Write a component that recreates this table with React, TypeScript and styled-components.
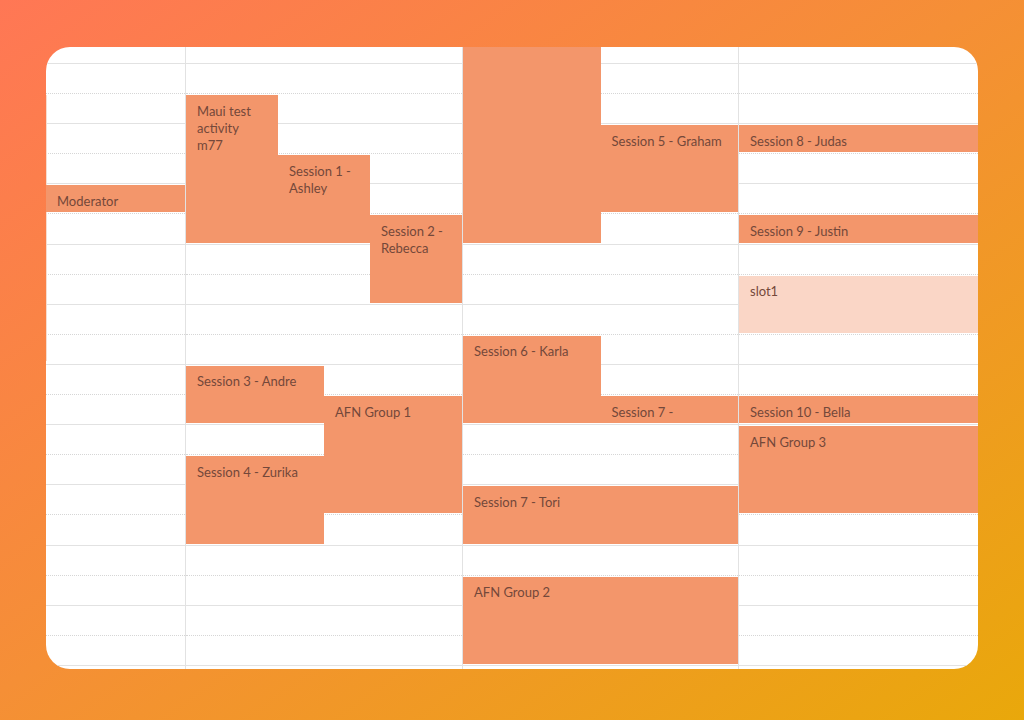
import React from 'react';
import styled, { createGlobalStyle } from 'styled-components';

const GlobalStyle = createGlobalStyle`
  html, body { margin: 0; padding: 0; }
  body { font-family: Lato, "Noto Sans", sans-serif; }
  * { box-sizing: border-box; }
`;

const ROWS = 23;

const Page = styled.div`
  width: 1024px;
  height: 720px;
  padding: 47px 46px 51px;
  display: flex;
  background: linear-gradient(to bottom right, #ff7755 0%, #f58f36 48%, #e9a80b 100%);
`;

const Card = styled.div`
  flex: 1;
  background: #ffffff;
  border-radius: 24px;
  overflow: hidden;
`;

const Timeline = styled.div`
  display: grid;
  grid-template-columns: 139px 277px 276px 240px;
  margin-top: -43.2px;
`;

const DayColumn = styled.div<{ $sub: number; $divider?: boolean }>`
  display: grid;
  grid-template-columns: repeat(${(p) => p.$sub}, minmax(0, 1fr));
  grid-template-rows: repeat(${ROWS}, 30.1px);
  border-left: ${(p) => (p.$divider ? '1px solid #e2e2e2' : 'none')};
`;

const Slot = styled.div<{ $row: number; $half: boolean }>`
  grid-column: 1 / -1;
  grid-row: ${(p) => p.$row};
  border-bottom: ${(p) => (p.$half ? '1px dotted #d6d6d6' : '1px solid #e2e2e2')};
`;

const Trace = styled.div<{ $row: string }>`
  grid-column: 1 / 2;
  grid-row: ${(p) => p.$row};
  width: 1px;
  background: #f6dccf;
  margin: 1px 0 4px;
`;

const Event = styled.div<{ $row: string; $col: string; $soft?: boolean; $narrow?: boolean }>`
  grid-row: ${(p) => p.$row};
  grid-column: ${(p) => p.$col};
  margin: 1px 0 2px;
  padding: 7.5px ${(p) => (p.$narrow ? '14px' : '10px')} 0 11px;
  background: ${(p) => (p.$soft ? '#fad6c6' : '#f3966b')};
  color: #74483a;
  font-size: 13px;
  line-height: 17px;
  overflow: hidden;
  min-width: 0;
  z-index: 1;
`;

type Ev = { t: string; row: string; col: string; soft?: boolean; narrow?: boolean };

const columns: { sub: number; events: Ev[]; trace?: string }[] = [
  {
    sub: 1,
    trace: '4 / 13',
    events: [{ t: 'Moderator', row: '7 / 8', col: '1 / 2' }],
  },
  {
    sub: 6,
    events: [
      { t: 'Maui test activity m77', row: '4 / 9', col: '1 / 3', narrow: true },
      { t: 'Session 1 - Ashley', row: '6 / 9', col: '3 / 5', narrow: true },
      { t: 'Session 2 - Rebecca', row: '8 / 11', col: '5 / 7', narrow: true },
      { t: 'Session 3 - Andre', row: '13 / 15', col: '1 / 4' },
      { t: 'AFN Group 1', row: '14 / 18', col: '4 / 7' },
      { t: 'Session 4 - Zurika', row: '16 / 19', col: '1 / 4' },
    ],
  },
  {
    sub: 2,
    events: [
      { t: '', row: '1 / 9', col: '1 / 2' },
      { t: 'Session 5 - Graham', row: '5 / 8', col: '2 / 3' },
      { t: 'Session 6 - Karla', row: '12 / 15', col: '1 / 2' },
      { t: 'Session 7 -', row: '14 / 15', col: '2 / 3' },
      { t: 'Session 7 - Tori', row: '17 / 19', col: '1 / 3' },
      { t: 'AFN Group 2', row: '20 / 23', col: '1 / 3' },
    ],
  },
  {
    sub: 1,
    events: [
      { t: 'Session 8 - Judas', row: '5 / 6', col: '1 / 2' },
      { t: 'Session 9 - Justin', row: '8 / 9', col: '1 / 2' },
      { t: 'slot1', row: '10 / 12', col: '1 / 2', soft: true },
      { t: 'Session 10 - Bella', row: '14 / 15', col: '1 / 2' },
      { t: 'AFN Group 3', row: '15 / 18', col: '1 / 2' },
    ],
  },
];

export default function App() {
  return (
    <>
      <GlobalStyle />
      <Page>
        <Card>
          <Timeline>
            {columns.map((c, ci) => (
              <DayColumn key={ci} $sub={c.sub} $divider={ci > 0}>
                {Array.from({ length: ROWS }, (_, i) => (
                  <Slot key={'s' + i} $row={i + 1} $half={i % 2 === 0} />
                ))}
                {c.trace && <Trace $row={c.trace} />}
                {c.events.map((e, ei) => (
                  <Event key={ei} $row={e.row} $col={e.col} $soft={e.soft} $narrow={e.narrow}>
                    {e.t}
                  </Event>
                ))}
              </DayColumn>
            ))}
          </Timeline>
        </Card>
      </Page>
    </>
  );
}
